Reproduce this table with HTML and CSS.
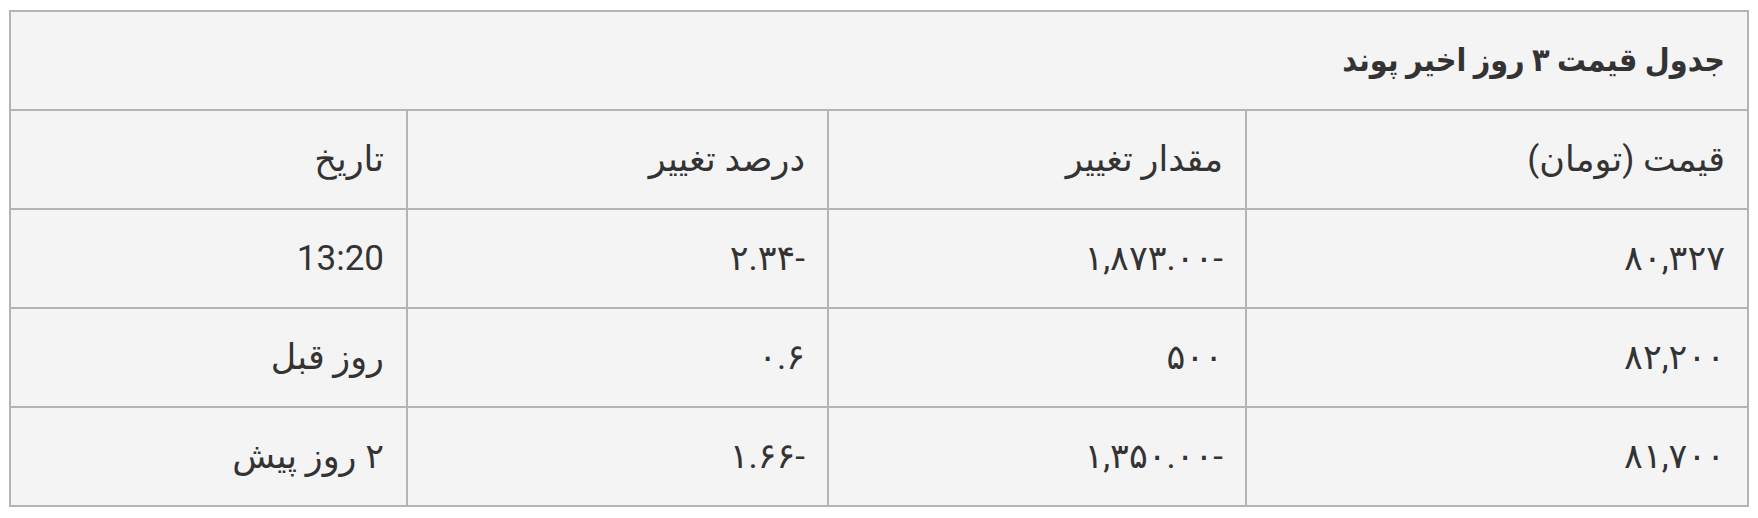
FILE: index.html
```html
<!DOCTYPE html>
<html lang="fa" dir="rtl">
<head>
<meta charset="utf-8">
<title>جدول قیمت ۳ روز اخیر پوند</title>
<link rel="stylesheet" href="styles.css">
</head>
<body>
<table class="price-table">
  <colgroup>
    <col class="c-price">
    <col class="c-amount">
    <col class="c-percent">
    <col class="c-date">
  </colgroup>
  <thead>
    <tr>
      <th class="title" colspan="4">جدول قیمت ۳ روز اخیر پوند</th>
    </tr>
    <tr>
      <th>قیمت (تومان)</th>
      <th>مقدار تغییر</th>
      <th>درصد تغییر</th>
      <th>تاریخ</th>
    </tr>
  </thead>
  <tbody>
    <tr>
      <td>۸۰,۳۲۷</td>
      <td>-۱,۸۷۳.۰۰</td>
      <td>-۲.۳۴</td>
      <td>13:20</td>
    </tr>
    <tr>
      <td>۸۲,۲۰۰</td>
      <td>۵۰۰</td>
      <td>۰.۶</td>
      <td>روز قبل</td>
    </tr>
    <tr>
      <td>۸۱,۷۰۰</td>
      <td>-۱,۳۵۰.۰۰</td>
      <td>-۱.۶۶</td>
      <td>۲ روز پیش</td>
    </tr>
  </tbody>
</table>
</body>
</html>
```
FILE: styles.css
```css
html, body {
  background: #ffffff;
}
body {
  margin: 10px 9px;
  font-family: Roboto, "DejaVu Sans", sans-serif;
  color: #333333;
}
.price-table {
  width: 1740px;
  table-layout: fixed;
  border-collapse: separate;
  border-spacing: 0;
  border: 1px solid #b4b4b4;
  background: #f4f4f4;
  font-size: 35px;
}
.c-price { width: 502px; }
.c-amount { width: 418px; }
.c-percent { width: 421px; }
.c-date { width: 397px; }
.price-table th,
.price-table td {
  box-sizing: border-box;
  border: 1px solid #b4b4b4;
  padding: 22px 22px;
  height: 99px;
  line-height: 53px;
  text-align: right;
  font-weight: normal;
  white-space: nowrap;
}
.price-table th.title {
  font-weight: bold;
  font-stretch: condensed;
  font-size: 32px;
  padding-right: 22px;
}
```
